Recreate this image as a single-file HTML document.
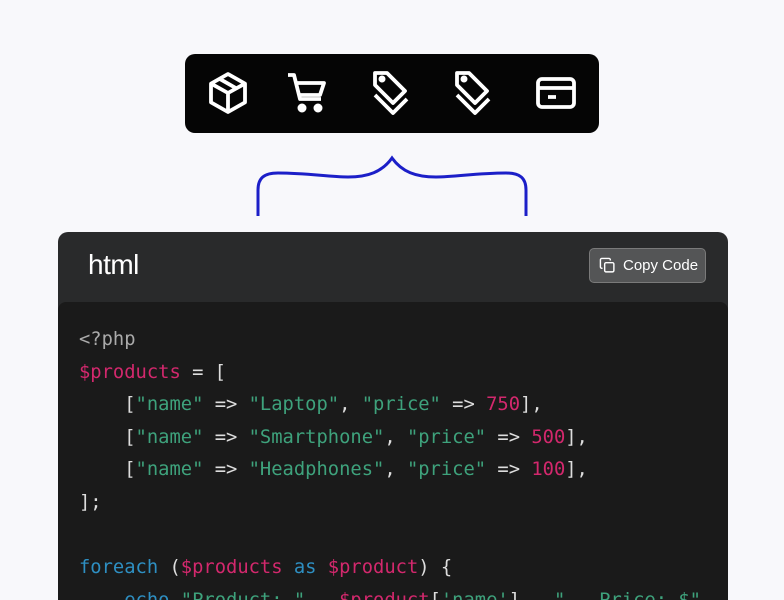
<!DOCTYPE html>
<html style="overflow:hidden"><head><style>
body{margin:0;background:#f8f8fb;width:784px;height:600px;overflow:hidden;position:relative;font-family:"Liberation Sans",sans-serif}
.tb{position:absolute;left:185px;top:54px;width:414px;height:79px;background:#050505;border-radius:10px}
.tb svg{position:absolute;top:15px}
.card{position:absolute;left:58px;top:232px;width:670px;height:368px;background:#292a2b;border-radius:10px 10px 0 0;overflow:hidden}
.h{position:absolute;left:30px;top:17px;color:#fff;font-size:28px;letter-spacing:-0.5px}
.btn{position:absolute;left:531px;top:16px;width:117px;height:35px;box-sizing:border-box;background:#545556;border:1px solid #7a7a7a;border-radius:5px;color:#fff;font-size:15px;line-height:33px;padding-left:33px}
.code{position:absolute;left:0;top:70px;width:670px;height:298px;overflow:hidden;background:#1a1a1a;border-radius:8px 8px 0 0;font-family:"DejaVu Sans Mono",monospace;font-size:18.8px;line-height:32.6px;color:#ddd;white-space:pre;padding:22px 0 0 21px;box-sizing:border-box}
.p{color:#d3286d}.g{color:#3ea27c}.b{color:#2e8fc2}.c{color:#aaa}
</style></head><body>
<div class="tb">
<svg style="left:19px" width="48" height="48" viewBox="0 0 24 24" fill="none" stroke="#fff" stroke-width="1.9" stroke-linejoin="round"><path d="M12 2.5l8.5 4.8v9.4L12 21.5l-8.5-4.8V7.3z"/><path d="M3.5 7.3L12 12l8.5-4.7M12 12v9.5M7.8 4.9l8.4 4.8"/></svg>
<svg style="left:99px" width="48" height="48" viewBox="0 0 24 24" fill="none" stroke="#fff" stroke-width="1.9" stroke-linejoin="round"><path d="M2 3h3l3 12h10.5M6.5 7H20l-2 6H8"/><circle cx="9" cy="19.5" r="1.3" fill="#fff"/><circle cx="17" cy="19.5" r="1.3" fill="#fff"/></svg>
<svg style="left:182px" width="48" height="48" viewBox="0 0 24 24" fill="none" stroke="#fff" stroke-width="1.9" stroke-linejoin="round"><path d="M4 2h6l9 9-6 6-9-9z"/><path d="M4 13l9 9 7-7"/><circle cx="7.5" cy="5" r="0.8" fill="#fff"/></svg>
<svg style="left:264px" width="48" height="48" viewBox="0 0 24 24" fill="none" stroke="#fff" stroke-width="1.9" stroke-linejoin="round"><path d="M4 2h6l9 9-6 6-9-9z"/><path d="M4 13l9 9 7-7"/><circle cx="7.5" cy="5" r="0.8" fill="#fff"/></svg>
<svg style="left:347px" width="48" height="48" viewBox="0 0 24 24" fill="none" stroke="#fff" stroke-width="1.9" stroke-linejoin="round"><rect x="3" y="5" width="18" height="14" rx="2"/><path d="M3 9.5h18M8 14h4"/></svg>
</div>
<svg style="position:absolute;left:250px;top:150px" width="290" height="70" viewBox="0 0 290 70" fill="none" stroke="#1c1fc8" stroke-width="3"><path d="M8 66V40c0-12 6-17 20-17 30 0 50 4 70 4 20 0 34-5 44-19 10 14 24 19 44 19 20 0 40-4 70-4 14 0 20 5 20 17v26"/></svg>
<div class="card">
<div class="h">html</div>
<div class="btn"><svg style="position:absolute;left:9px;top:8px" width="17" height="17" viewBox="0 0 24 24" fill="none" stroke="#fff" stroke-width="2"><rect x="8" y="8" width="13" height="13" rx="2"/><path d="M5 16H4a2 2 0 0 1-2-2V4a2 2 0 0 1 2-2h10a2 2 0 0 1 2 2v1"/></svg>Copy Code</div>
<div class="code"><span class="c">&lt;?php</span>
<span class="p">$products</span> = [
    [<span class="g">"name"</span> =&gt; <span class="g">"Laptop"</span>, <span class="g">"price"</span> =&gt; <span class="p">750</span>],
    [<span class="g">"name"</span> =&gt; <span class="g">"Smartphone"</span>, <span class="g">"price"</span> =&gt; <span class="p">500</span>],
    [<span class="g">"name"</span> =&gt; <span class="g">"Headphones"</span>, <span class="g">"price"</span> =&gt; <span class="p">100</span>],
];

<span class="b">foreach</span> (<span class="p">$products</span> <span class="b">as</span> <span class="p">$product</span>) {
    <span class="b">echo</span> <span class="g">"Product: "</span> . <span class="p">$product</span>[<span class="g">'name'</span>] . <span class="g">" - Price: $"</span></div>
</div>
</body></html>
